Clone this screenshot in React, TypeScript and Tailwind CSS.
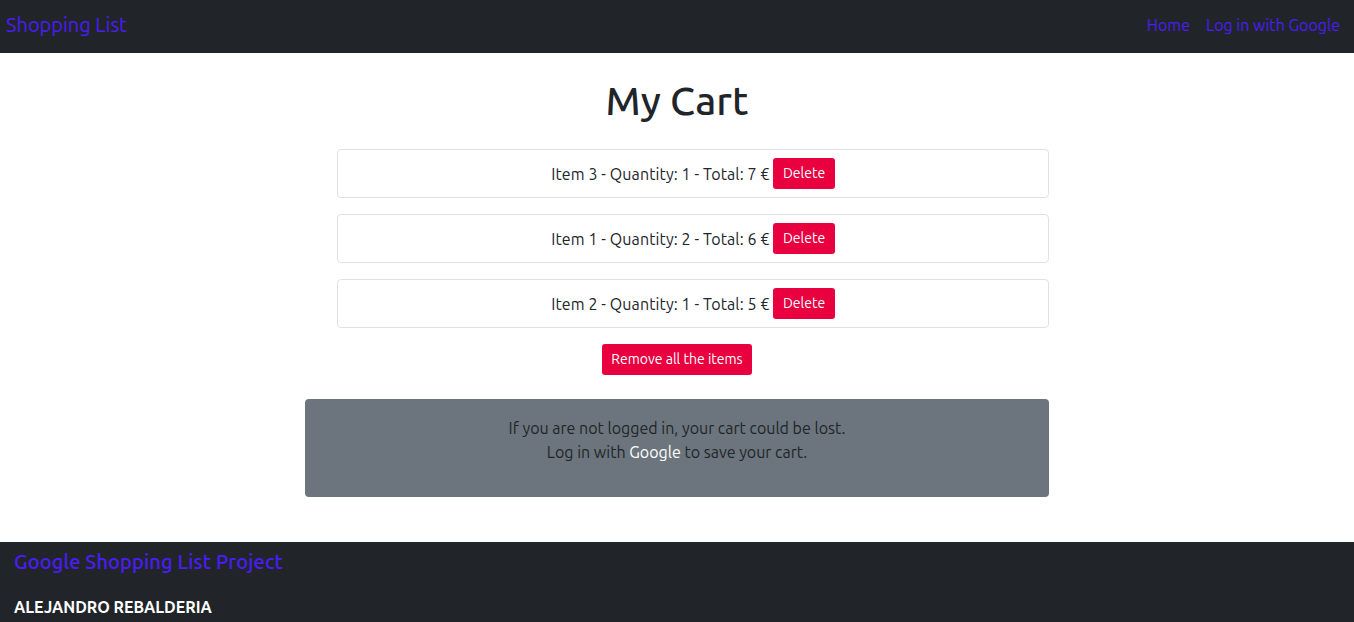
import React from "react";

const items = [
  { name: "Item 3", qty: 1, total: 7 },
  { name: "Item 1", qty: 2, total: 6 },
  { name: "Item 2", qty: 1, total: 5 },
];

export default function App() {
  return (
    <div className="min-h-[622px] bg-white font-['Ubuntu','Lato',sans-serif] text-[#212529]">
      <nav className="flex h-[53px] items-center justify-between bg-[#212529] pb-[4px] pl-[6px] pr-[14px]">
        <a className="text-[20px] text-[#4b1cf7]">Shopping List</a>
        <div className="flex items-center gap-4 text-[16px] text-[#4b1cf7]">
          <a>Home</a>
          <a>Log in with Google</a>
        </div>
      </nav>

      <main className="mx-auto flex w-[744px] flex-col items-center pt-[24px]">
        <h1 className="text-[40px] font-medium leading-[48px]">My Cart</h1>
        <div className="mt-[24px] flex w-full flex-col gap-4 pl-[32px]">
          {items.map((it) => (
            <div
              key={it.name}
              className="flex items-center justify-center gap-1 rounded border border-[#dee2e6] p-2"
            >
              <span className="text-[16px] tracking-[0.1px]">
                {it.name} - Quantity: {it.qty} - Total: {it.total} €
              </span>
              <button className="h-[31px] rounded-[3px] bg-[#e9003f] px-[9.5px] text-[14px] text-white">
                Delete
              </button>
            </div>
          ))}
        </div>
        <button className="mt-4 h-[31px] rounded-[3px] bg-[#e9003f] px-[9.5px] text-[14px] text-white">
          Remove all the items
        </button>
        <div className="mt-6 w-full rounded bg-[#6c757d] pb-[33px] pt-[17px] text-center text-[16px] leading-6 text-[#212529]">
          <p>If you are not logged in, your cart could be lost.</p>
          <p>
            Log in with <a className="text-white">Google</a> to save your cart.
          </p>
        </div>
      </main>

      <footer className="mt-[45px] bg-[#212529] px-[14px] pt-[8px] pb-[6px]">
        <h5 className="text-[20px] font-medium leading-6 tracking-[0.15px] text-[#4b1cf7]">
          Google Shopping List Project
        </h5>
        <p className="mt-[21px] text-[16px] font-semibold leading-6 text-white">
          ALEJANDRO REBALDERIA
        </p>
      </footer>
    </div>
  );
}
